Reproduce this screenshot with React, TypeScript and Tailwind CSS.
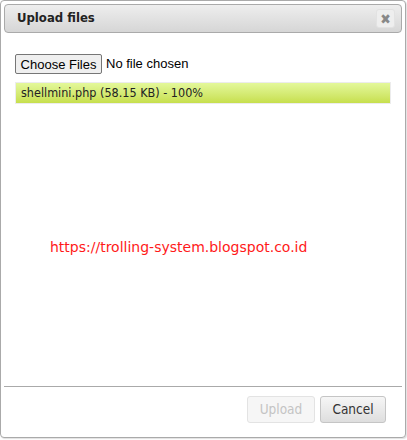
import React from 'react';

const tahoma = { fontFamily: '"DejaVu Sans Condensed", "DejaVu Sans", sans-serif' };
const arial = { fontFamily: '"Liberation Sans", Arial, sans-serif' };
const verdana = { fontFamily: '"DejaVu Sans", Verdana, sans-serif' };

export default function App() {
  return (
    <div className="w-[407px] h-[440px] bg-white" style={tahoma}>
      <div className="w-[406px] h-[438px] border border-[#aaaaaa] rounded-[4px] p-[3px] flex flex-col bg-white shadow-[1px_1px_1px_rgba(0,0,0,0.12)]">
        {/* title bar */}
        <div className="h-[29px] shrink-0 border border-[#aaaaaa] rounded-[4px] bg-gradient-to-b from-[#eeeeee] to-[#d6d6d6] flex items-center justify-between pl-[12px] pr-[6px]">
          <span className="text-[13px] font-bold text-[#222222] -mt-[1px]">Upload files</span>
          <button className="w-[19px] h-[19px] rounded-[3px] bg-[#eeeeee] border border-[#e2e2e2] flex items-center justify-center text-[#888888] text-[14px] leading-none">
            ✖
          </button>
        </div>

        {/* content */}
        <div className="flex-1 pt-[21px] pl-[11px] pr-[12px]">
          <div className="flex items-center gap-[4px]" style={arial}>
            <button className="h-[20px] w-[87px] border border-[#767676] rounded-[2px] bg-[#efefef] text-[13px] text-black leading-none">
              Choose Files
            </button>
            <span className="text-[13px] text-black">No file chosen</span>
          </div>
          <div className="mt-[8px] h-[22px] w-[376px] border border-[#ececec] bg-gradient-to-b from-[#e4f89a] to-[#c7df4c] flex items-center pl-[5px] text-[12.5px] text-[#222222]">
            shellmini.php (58.15 KB) - 100%
          </div>
          <div className="mt-[133px] pl-[35px] text-[14px] text-[#ff1a1a]" style={verdana}>
            https://trolling-system.blogspot.co.id
          </div>
        </div>

        {/* button pane */}
        <div className="h-[48px] shrink-0 border-t border-[#aaaaaa] flex items-start justify-end gap-[5px] pt-[9px] pr-[16px]">
          <button
            disabled
            className="h-[27px] w-[68px] border border-[#e3e3e3] rounded-[3px] bg-[#f6f6f6] text-[13.5px] text-[#c4c4c4]"
          >
            Upload
          </button>
          <button className="h-[27px] w-[66px] border border-[#c5c5c5] rounded-[3px] bg-gradient-to-b from-[#f6f6f6] to-[#dedede] text-[13.5px] text-[#333333]">
            Cancel
          </button>
        </div>
      </div>
    </div>
  );
}
